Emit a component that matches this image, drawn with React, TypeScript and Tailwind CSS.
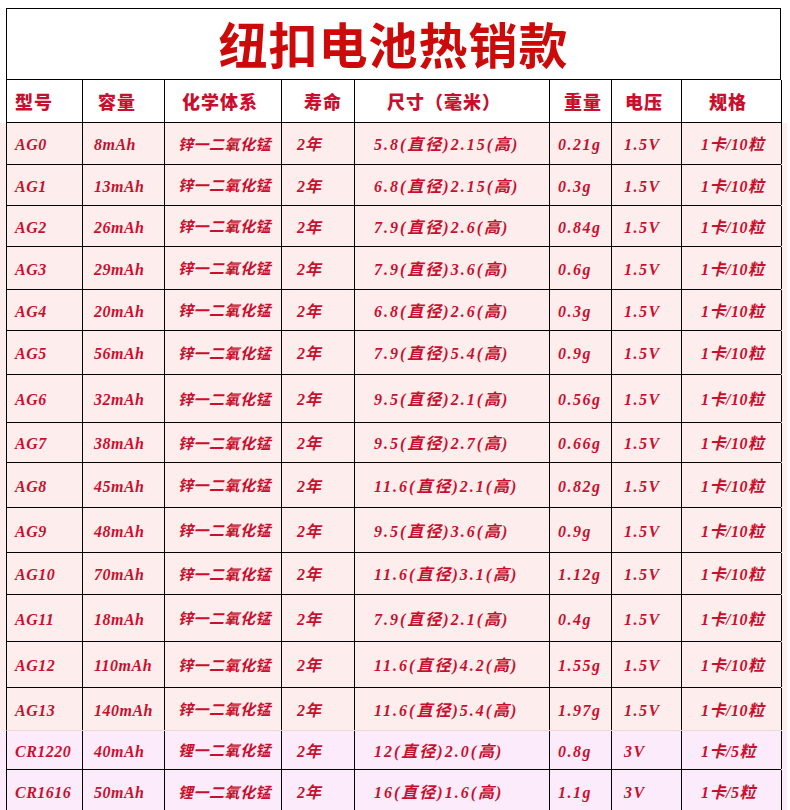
type Row = {
  model: string;
  cap: string;
  chem: string;
  life: string;
  size: string;
  weight: string;
  volt: string;
  spec: string;
  h: string;
  cr?: boolean;
};

const rows: Row[] = [
  { model: 'AG0', cap: '8mAh', chem: '锌一二氧化锰', life: '2年', size: '5.8(直径)2.15(高)', weight: '0.21g', volt: '1.5V', spec: '1卡/10粒', h: 'h-[42px]' },
  { model: 'AG1', cap: '13mAh', chem: '锌一二氧化锰', life: '2年', size: '6.8(直径)2.15(高)', weight: '0.3g', volt: '1.5V', spec: '1卡/10粒', h: 'h-[41px]' },
  { model: 'AG2', cap: '26mAh', chem: '锌一二氧化锰', life: '2年', size: '7.9(直径)2.6(高)', weight: '0.84g', volt: '1.5V', spec: '1卡/10粒', h: 'h-[41px]' },
  { model: 'AG3', cap: '29mAh', chem: '锌一二氧化锰', life: '2年', size: '7.9(直径)3.6(高)', weight: '0.6g', volt: '1.5V', spec: '1卡/10粒', h: 'h-[43px]' },
  { model: 'AG4', cap: '20mAh', chem: '锌一二氧化锰', life: '2年', size: '6.8(直径)2.6(高)', weight: '0.3g', volt: '1.5V', spec: '1卡/10粒', h: 'h-[41px]' },
  { model: 'AG5', cap: '56mAh', chem: '锌一二氧化锰', life: '2年', size: '7.9(直径)5.4(高)', weight: '0.9g', volt: '1.5V', spec: '1卡/10粒', h: 'h-[44px]' },
  { model: 'AG6', cap: '32mAh', chem: '锌一二氧化锰', life: '2年', size: '9.5(直径)2.1(高)', weight: '0.56g', volt: '1.5V', spec: '1卡/10粒', h: 'h-[48px]' },
  { model: 'AG7', cap: '38mAh', chem: '锌一二氧化锰', life: '2年', size: '9.5(直径)2.7(高)', weight: '0.66g', volt: '1.5V', spec: '1卡/10粒', h: 'h-[40px]' },
  { model: 'AG8', cap: '45mAh', chem: '锌一二氧化锰', life: '2年', size: '11.6(直径)2.1(高)', weight: '0.82g', volt: '1.5V', spec: '1卡/10粒', h: 'h-[45px]' },
  { model: 'AG9', cap: '48mAh', chem: '锌一二氧化锰', life: '2年', size: '9.5(直径)3.6(高)', weight: '0.9g', volt: '1.5V', spec: '1卡/10粒', h: 'h-[45px]' },
  { model: 'AG10', cap: '70mAh', chem: '锌一二氧化锰', life: '2年', size: '11.6(直径)3.1(高)', weight: '1.12g', volt: '1.5V', spec: '1卡/10粒', h: 'h-[42px]' },
  { model: 'AG11', cap: '18mAh', chem: '锌一二氧化锰', life: '2年', size: '7.9(直径)2.1(高)', weight: '0.4g', volt: '1.5V', spec: '1卡/10粒', h: 'h-[47px]' },
  { model: 'AG12', cap: '110mAh', chem: '锌一二氧化锰', life: '2年', size: '11.6(直径)4.2(高)', weight: '1.55g', volt: '1.5V', spec: '1卡/10粒', h: 'h-[46px]' },
  { model: 'AG13', cap: '140mAh', chem: '锌一二氧化锰', life: '2年', size: '11.6(直径)5.4(高)', weight: '1.97g', volt: '1.5V', spec: '1卡/10粒', h: 'h-[43px]' },
  { model: 'CR1220', cap: '40mAh', chem: '锂一二氧化锰', life: '2年', size: '12(直径)2.0(高)', weight: '0.8g', volt: '3V', spec: '1卡/5粒', h: 'h-[39px]', cr: true },
  { model: 'CR1616', cap: '50mAh', chem: '锂一二氧化锰', life: '2年', size: '16(直径)1.6(高)', weight: '1.1g', volt: '3V', spec: '1卡/5粒', h: 'h-[44px]', cr: true },
];

const grid = 'grid grid-cols-[76px_82px_117px_73px_195px_62px_70px_100px]';
const headCell = 'flex items-center border-r border-b border-black';
const cell = 'flex items-center border-r border-black pt-[3px]';

export default function App() {
  return (
    <div className="w-[790px] h-[810px] overflow-hidden bg-white text-[#c8102e]">
      {/* title */}
      <div className="ml-[6px] mt-[8px] w-[775px] h-[72px] border border-black flex items-center justify-center">
        <h1 className="text-[49px] font-bold tracking-[1px] text-[#cc0a0a] [font-family:'Noto_Sans_CJK_SC',sans-serif] pb-[2px]">
          纽扣电池热销款
        </h1>
      </div>

      {/* header */}
      <div className={`${grid} ml-[6px] w-[775px] h-[43px] border-l border-black text-[18px] font-black tracking-[1px] [font-family:'Noto_Sans_CJK_SC',sans-serif]`}>
        <div className={`${headCell} pl-[8px]`}>型号</div>
        <div className={`${headCell} pl-[15px]`}>容量</div>
        <div className={`${headCell} pl-[17px]`}>化学体系</div>
        <div className={`${headCell} pl-[22px]`}>寿命</div>
        <div className={`${headCell} pl-[32px]`}>尺寸（毫米）</div>
        <div className={`${headCell} pl-[14px]`}>重量</div>
        <div className={`${headCell} pl-[13px]`}>电压</div>
        <div className={`${headCell} pl-[27px]`}>规格</div>
      </div>

      {/* body */}
      <div className="w-[787px] font-bold italic text-[16px] [font-family:'Liberation_Serif','Noto_Sans_CJK_SC',serif]">
        {rows.map((r, i) => {
          const next = rows[i + 1];
          const soft = next && next.cr && !r.cr;
          return (
            <div key={r.model} className={r.cr ? 'bg-[#fcebfa] pl-[6px]' : 'bg-[#fdeded] pl-[6px]'}>
              <div className={`${grid} ${r.h} w-[775px] border-l border-black border-b ${soft ? 'border-b-[#f3d6d3]' : 'border-b-black'}`}>
                <div className={`${cell} pl-[8px] tracking-[0.5px]`}>{r.model}</div>
                <div className={`${cell} pl-[11px] tracking-[0.5px]`}>{r.cap}</div>
                <div className={`${cell} pl-[13px] text-[15px] tracking-[0.5px]`}>{r.chem}</div>
                <div className={`${cell} pl-[15px]`}>{r.life}</div>
                <div className={`${cell} pl-[19px] tracking-[2px]`}>{r.size}</div>
                <div className={`${cell} pl-[8px] tracking-[1.5px]`}>{r.weight}</div>
                <div className={`${cell} pl-[12px] tracking-[1.5px]`}>{r.volt}</div>
                <div className={`${cell} pl-[19px] tracking-[0.5px]`}>{r.spec}</div>
              </div>
            </div>
          );
        })}
      </div>
    </div>
  );
}
